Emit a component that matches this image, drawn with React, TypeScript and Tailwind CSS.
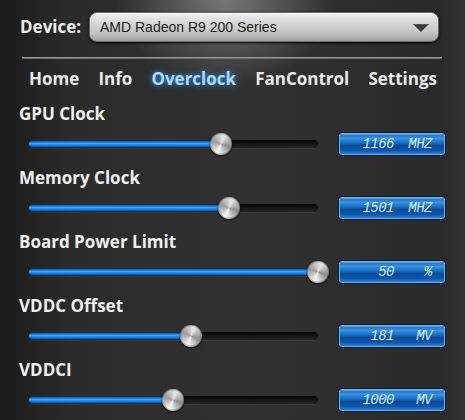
import React from "react";

const rows = [
  { label: "GPU Clock", value: "1166", unit: "MHZ", pct: 0.666 },
  { label: "Memory Clock", value: "1501", unit: "MHZ", pct: 0.693 },
  { label: "Board Power Limit", value: "50", unit: "%", pct: 1 },
  { label: "VDDC Offset", value: "181", unit: "MV", pct: 0.562 },
  { label: "VDDCI", value: "1000", unit: "MV", pct: 0.5 },
];

const tabs = ["Home", "Info", "Overclock", "FanControl", "Settings"];

function Slider({ pct }: { pct: number }) {
  return (
    <div className="relative ml-[28px] flex h-[22px] w-[290px] items-center">
      {/* empty track */}
      <div className="h-[8px] w-full rounded-full bg-[linear-gradient(to_bottom,#050505,#181818_60%,#262626)] shadow-[0_1px_0_rgba(255,255,255,0.06)]" />
      {/* filled part */}
      <div
        className="absolute left-0 top-[7px] h-[8px] rounded-full border border-[#072d58] bg-[linear-gradient(to_bottom,#0a4a8c,#34acff_40%,#1c8aee_65%,#0b4f95)]"
        style={{ width: `${pct * 100}%` }}
      />
      {/* thumb */}
      <div
        className="absolute top-0 h-[22px] w-[22px] rounded-full bg-[conic-gradient(from_200deg,#f4f4f4,#9a9a9a_25%,#e6e6e6_50%,#8c8c8c_75%,#f4f4f4)] shadow-[0_1px_2px_rgba(0,0,0,0.8),inset_0_0_0_1px_rgba(0,0,0,0.25)]"
        style={{ left: `calc(${pct * 100}% - 11px)` }}
      />
    </div>
  );
}

function Readout({ value, unit }: { value: string; unit: string }) {
  return (
    <div className="ml-[21px] flex h-[22px] w-[106px] items-center rounded-[3px] border border-[#5ab4ff] bg-[linear-gradient(to_bottom,#1c6cc2_0%,#3a92e0_22%,#1a72c8_42%,#0a4a98_58%,#0b55a8_82%,#2b80d8_100%)] font-['Liberation_Mono',monospace] text-[14px] italic leading-none tracking-[-0.5px] text-[#cfeeff] shadow-[0_0_0_1px_#0a1a2e,inset_0_1px_0_rgba(255,255,255,0.3)]">
      <span className="w-[54px] text-right">{value}</span>
      <span className="ml-auto pr-[12px]">{unit}</span>
    </div>
  );
}

export default function App() {
  return (
    <div className="relative h-[420px] w-[465px] overflow-hidden bg-[radial-gradient(ellipse_110px_85px_at_225px_0px,rgba(255,255,255,0.34),transparent),linear-gradient(to_right,#1b1b1b_0px,#2b2b2b_70px,#313131_250px,#2a2a2a_440px,#333333_465px)] font-['Open_Sans',sans-serif] text-[#f2f2f2]">
      {/* Device selector */}
      <div className="flex items-center pl-[20px] pt-[12px]">
        <span className="w-[69px] text-[17px] font-bold leading-[30px] text-[#ececec]">Device:</span>
        <div className="relative flex h-[30px] w-[350px] items-center rounded-[8px] border border-[#6a6a6a] bg-[linear-gradient(to_bottom,#f2f2f2_0%,#d8d8d8_35%,#c0c0c0_75%,#a0a0a0_100%)] pl-[10px] shadow-[0_1px_3px_rgba(0,0,0,0.9),inset_0_1px_0_#ffffff]">
          <span className="font-['Liberation_Sans',Arial,sans-serif] text-[14px] text-[#1e1e1e]">
            AMD Radeon R9 200 Series
          </span>
          <svg className="absolute right-[9px] top-[11px]" width="16" height="8" viewBox="0 0 16 8">
            <polygon points="0,0 16,0 8,8" fill="#3a3a3a" />
            <polygon points="0,0 16,0 15,1 1,1" fill="#555" />
          </svg>
        </div>
      </div>

      {/* separator */}
      <div className="ml-[22px] mt-[15px] h-[2px] w-[420px] bg-[linear-gradient(to_bottom,#a8a8a8,#5a5a5a)]" />

      {/* tabs */}
      <nav className="ml-[29px] flex h-[40px] w-[408px] items-center justify-between text-[17px] font-bold">
        {tabs.map((t) => (
          <span
            key={t}
            className={
              t === "Overclock"
                ? "text-[#a9dcff] [text-shadow:0_0_6px_#3a9cff]"
                : "text-[#e9e9e9]"
            }
          >
            {t}
          </span>
        ))}
      </nav>

      {/* rows */}
      <div className="pt-[5px]">
        {rows.map((r) => (
          <div key={r.label} className="h-[64px]">
            <div className="pl-[19px] text-[17px] font-bold leading-[20px] text-[#f0f0f0]">{r.label}</div>
            <div className="mt-[9px] flex items-center">
              <Slider pct={r.pct} />
              <Readout value={r.value} unit={r.unit} />
            </div>
          </div>
        ))}
      </div>
    </div>
  );
}
